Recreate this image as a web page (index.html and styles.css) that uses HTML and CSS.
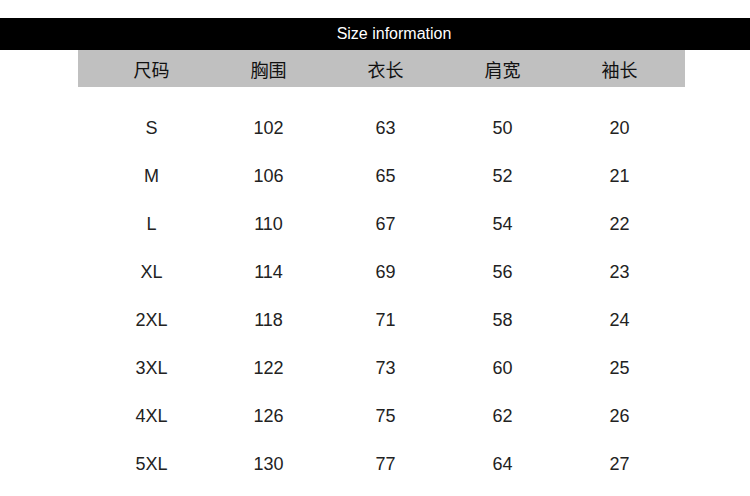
FILE: index.html
```html
<!DOCTYPE html>
<html lang="zh">
<head>
<meta charset="utf-8">
<link rel="stylesheet" href="styles.css">
</head>
<body>
<div class="title">Size information</div>
<div class="table">
  <div class="head">
    <div>尺码</div><div>胸围</div><div>衣长</div><div>肩宽</div><div>袖长</div>
  </div>
  <div class="rows">
    <div class="row"><div>S</div><div>102</div><div>63</div><div>50</div><div>20</div></div>
    <div class="row"><div>M</div><div>106</div><div>65</div><div>52</div><div>21</div></div>
    <div class="row"><div>L</div><div>110</div><div>67</div><div>54</div><div>22</div></div>
    <div class="row"><div>XL</div><div>114</div><div>69</div><div>56</div><div>23</div></div>
    <div class="row"><div>2XL</div><div>118</div><div>71</div><div>58</div><div>24</div></div>
    <div class="row"><div>3XL</div><div>122</div><div>73</div><div>60</div><div>25</div></div>
    <div class="row"><div>4XL</div><div>126</div><div>75</div><div>62</div><div>26</div></div>
    <div class="row"><div>5XL</div><div>130</div><div>77</div><div>64</div><div>27</div></div>
  </div>
</div>
</body>
</html>
```
FILE: styles.css
```css
html, body {
  margin: 0;
  padding: 0;
  background: #fff;
  width: 750px;
  height: 496px;
  overflow: hidden;
  font-family: "Liberation Sans", "Noto Sans CJK SC", sans-serif;
}
.title {
  margin-top: 18px;
  height: 32px;
  background: #000;
  color: #fff;
  font-size: 16px;
  line-height: 32px;
  text-align: center;
  padding-left: 38px;
}
.table {
  width: 607px;
  margin-left: 78px;
}
.head {
  height: 37px;
  background: #c0c0c0;
  display: grid;
  grid-template-columns: repeat(5, 117px);
  padding-left: 15px;
  align-items: center;
  font-family: "Noto Sans CJK SC", sans-serif;
  font-size: 18px;
  color: #111;
}
.head > div, .row > div {
  text-align: center;
}
.rows {
  padding-top: 17px;
}
.row {
  height: 48px;
  display: grid;
  grid-template-columns: repeat(5, 117px);
  padding-left: 15px;
  align-items: center;
  font-size: 18px;
  color: #222;
}
```
